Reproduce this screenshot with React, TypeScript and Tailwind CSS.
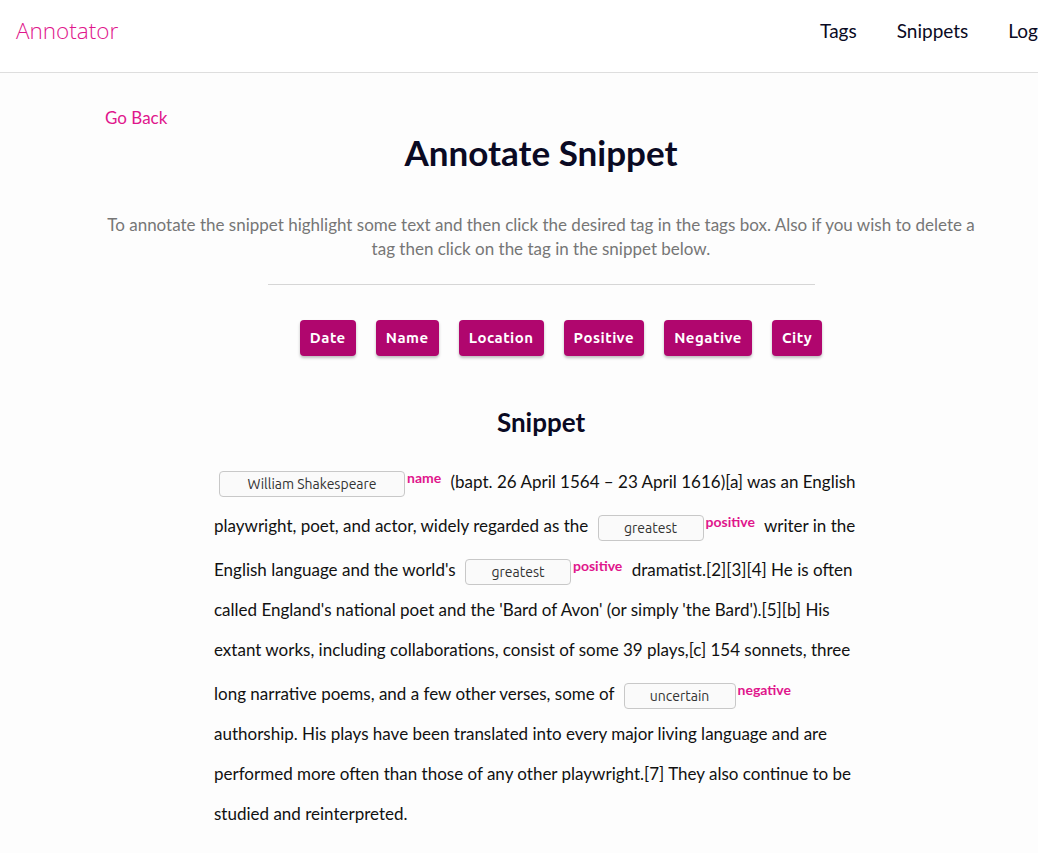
const tags = ['Date', 'Name', 'Location', 'Positive', 'Negative', 'City']

function Chip({ text, label, w }: { text: string; label: string; w: string }) {
  return (
    <>
      <span
        className={`inline-block ${w} h-[26px] ml-[5px] align-middle rounded border border-[#c8c8c8] bg-[#fafafa] text-center text-[14px] leading-[24px] text-[#333] font-['Ubuntu','Noto_Sans',sans-serif]`}
      >
        {text}
      </span>
      <span className="ml-[2px] mr-[5px] align-[5px] text-[14px] font-bold text-[#e0168c]">
        {label}
      </span>
    </>
  )
}

export default function App() {
  return (
    <div className="w-[1038px] min-h-[853px] overflow-hidden bg-[#fdfdfd] font-['Lato',sans-serif]">
      <div className="w-[1082px]">
        <nav className="h-[73px] pb-[10px] bg-white border-b border-[#dedede] flex items-center pl-4 pr-6">
          <span className="text-[22.5px] text-[#e0168c] font-['Open_Sans',sans-serif] font-light">Annotator</span>
          <div className="ml-auto flex items-center gap-[40px] text-[19px] text-[#0a0a23] mr-[-8px]">
            <a>Tags</a>
            <a>Snippets</a>
            <a>Logout</a>
          </div>
        </nav>

        <div className="pt-[33px] pl-[105px]">
          <a className="text-[17px] leading-[24px] text-[#e0168c]">Go Back</a>
        </div>

        <h1 className="mt-0 text-center text-[35px] leading-[44px] font-bold text-[#0a0a23]">Annotate Snippet</h1>

        <p className="mt-[39px] mx-auto w-[880px] text-center text-[17px] leading-[24px] text-[#767676]">
          To annotate the snippet highlight some text and then click the desired tag in the tags box. Also if you wish to delete a tag then click on the tag in the snippet below.
        </p>

        <div className="mx-auto mt-[23px] w-[547px] h-px bg-[#d6d6d6]" />

        <div className="mt-[35px] flex justify-center gap-[20px] pl-[40px]">
          {tags.map((t) => (
            <button
              key={t}
              className="h-[36px] px-[10px] rounded bg-[#b0066e] text-white text-[15px] font-bold tracking-[0.5px] font-['Ubuntu','Noto_Sans',sans-serif] shadow-[0_2px_3px_rgba(0,0,0,0.25)]"
            >
              {t}
            </button>
          ))}
        </div>

        <h2 className="mt-[49px] text-center text-[26px] leading-[34px] font-bold text-[#0a0a23]">Snippet</h2>

        <p className="mx-auto mt-[19px] w-[654px] text-[17px] leading-[40px] text-[#111]">
          <Chip text="William Shakespeare" label="name" w="w-[186px]" /> (bapt. 26 April 1564 – 23 April 1616)[a] was an English playwright, poet, and actor, widely regarded as the{' '}
          <Chip text="greatest" label="positive" w="w-[106px]" /> writer in the English language and the world's{' '}
          <Chip text="greatest" label="positive" w="w-[106px]" /> dramatist.[2][3][4] He is often called England's national poet and the 'Bard of Avon' (or simply 'the Bard').[5][b] His extant works, including collaborations, consist of some 39 plays,[c] 154 sonnets, three long narrative poems, and a few other verses, some of{' '}
          <Chip text="uncertain" label="negative" w="w-[112px]" /> authorship. His plays have been translated into every major living language and are performed more often than those of any other playwright.[7] They also continue to be studied and reinterpreted.
        </p>
      </div>
    </div>
  )
}
